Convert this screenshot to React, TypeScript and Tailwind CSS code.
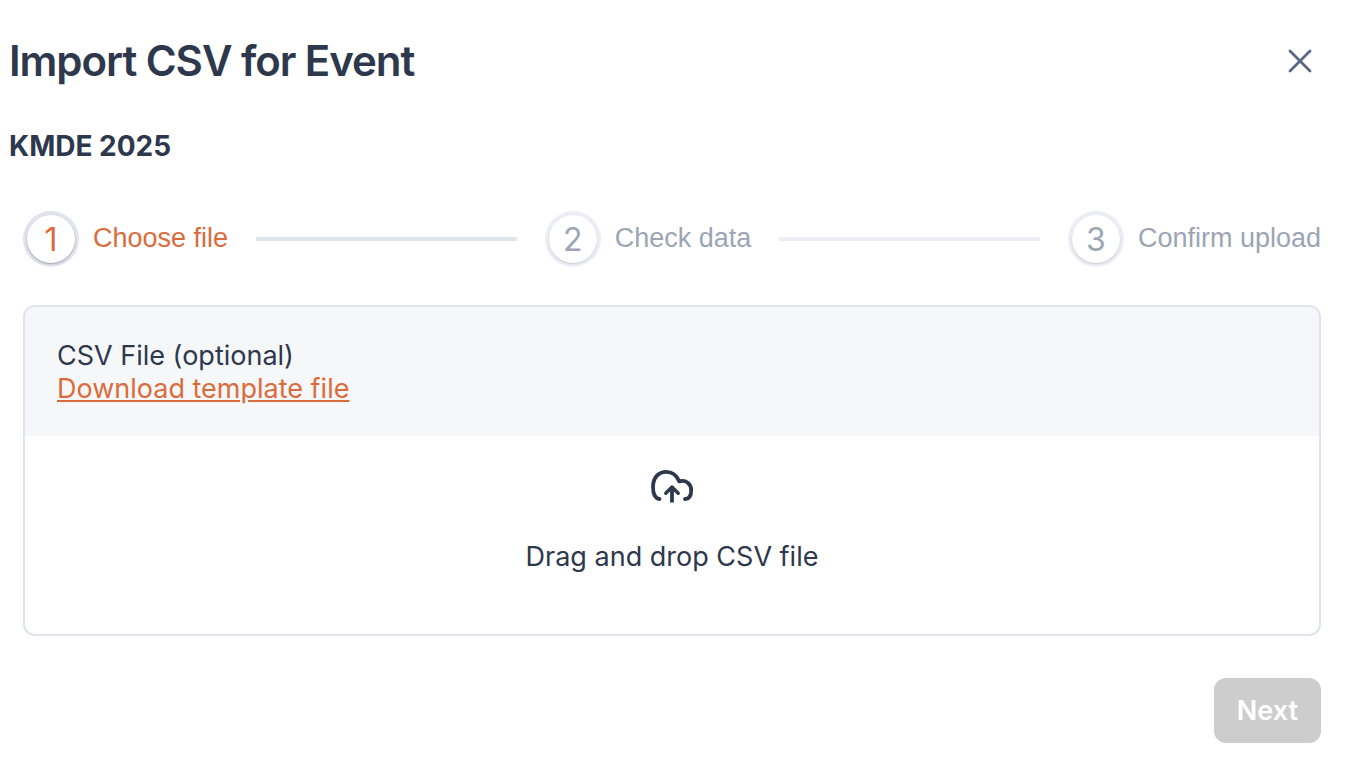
import { Fragment } from 'react'
import clsx from 'clsx'

const steps = ['Choose file', 'Check data', 'Confirm upload']

function CloudUploadIcon() {
  return (
    <svg
      className="h-9 w-11"
      viewBox="0 0 44 36"
      fill="none"
      stroke="currentColor"
      strokeWidth="3.8"
      strokeLinecap="round"
      strokeLinejoin="round"
      aria-hidden="true"
    >
      <path d="M9.5 31C5.2 30.4 3 26.5 3 19C3 9.5 8.5 3.9 16.3 3.9C22.5 3.9 26.8 7.6 29.3 13.4C36 11.6 41.2 16 41.2 22.3C41.2 27.5 39.5 31 35 31" />
      <path d="M22 19V34.5" strokeLinecap="butt" />
      <path d="M15.8 25.2L22 19L28.2 25.2" strokeWidth="3.4" />
    </svg>
  )
}

function Stepper({ current }: { current: number }) {
  return (
    <ol className="flex items-center font-['Liberation_Sans',Arial,sans-serif]">
      {steps.map((label, i) => {
        const isActive = i === current

        return (
          <Fragment key={label}>
            {i > 0 && (
              <li
                aria-hidden="true"
                className={clsx('mx-7 h-1 flex-1', i - 1 === current ? 'bg-[#dfe4ed]' : 'bg-[#ebeef4]')}
              />
            )}
            <li
              aria-current={isActive ? 'step' : undefined}
              className={clsx('flex items-center gap-3.5', isActive ? 'text-[#dc6b3c]' : 'text-[#9ca5b4]')}
            >
              <span className={clsx('size-14 rounded-full p-1', isActive ? 'bg-[#dfe4ed]' : 'bg-[#ebeef4]')}>
                <span
                  className={clsx(
                    'flex size-12 items-center justify-center rounded-full bg-white font-[Inter,sans-serif] text-[32px]',
                    isActive ? 'shadow-[0_1px_2px_#00000050]' : 'shadow-[0_1px_2px_#00000028]'
                  )}
                >
                  {i + 1}
                </span>
              </span>
              <span className="pb-0.5 text-[27px]">{label}</span>
            </li>
          </Fragment>
        )
      })}
    </ol>
  )
}

export default function App() {
  return (
    <main className="bg-white pb-8 pl-[9px] pr-[45px] pt-8 font-[Inter,sans-serif] text-[27px] leading-[33px] text-[#2e384d]">
      <header className="flex items-center justify-between">
        <h1 className="text-[42px] font-semibold leading-[58px] tracking-tight">Import CSV for Event</h1>
        <button type="button" aria-label="Close" className="flex size-[42px] items-center justify-center text-[#5a6785]">
          <svg className="size-6" viewBox="0 0 24 24" stroke="currentColor" strokeWidth="2.8" strokeLinecap="round">
            <path d="M2 2L22 22M22 2L2 22" />
          </svg>
        </button>
      </header>

      <h2 className="mt-10 text-[28px] font-bold">KMDE 2025</h2>

      <div className="ml-3.5 mt-12">
        <Stepper current={0} />

        <section className="mt-[38px] overflow-hidden rounded-xl border-2 border-[#dfe3ed]">
          <div className="bg-[#f5f7f9] px-8 pb-[31px] pt-8">
            <p>CSV File (optional)</p>
            <a href="#" className="text-[#dc6b3c] underline">
              Download template file
            </a>
          </div>
          <label className="flex cursor-pointer flex-col items-center gap-9 pb-[61px] pt-8">
            <CloudUploadIcon />
            <span>Drag and drop CSV file</span>
            <input type="file" accept=".csv" className="sr-only" />
          </label>
        </section>

        <div className="mt-[42px] flex justify-end">
          <button type="button" disabled className="rounded-xl bg-[#cdcdcd] px-[23px] py-4 font-semibold text-white">
            Next
          </button>
        </div>
      </div>
    </main>
  )
}
